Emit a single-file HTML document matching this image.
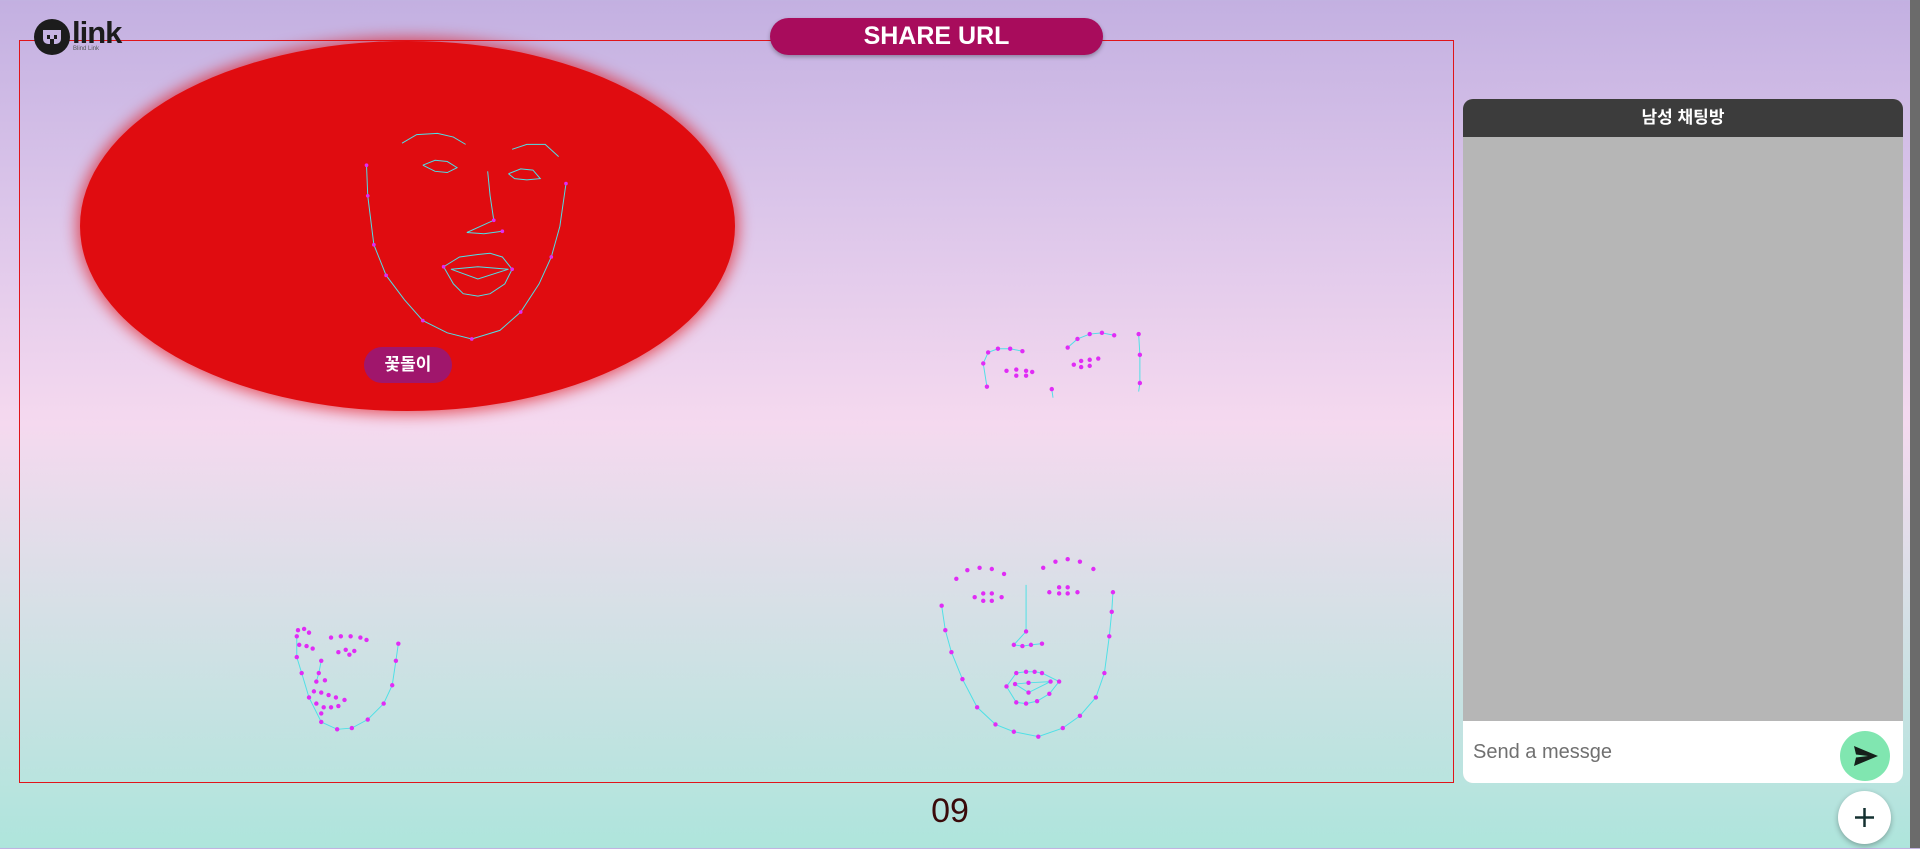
<!DOCTYPE html>
<html><head><meta charset="utf-8"><style>
*{margin:0;padding:0;box-sizing:border-box}
body{width:1920px;height:848px;overflow:hidden;position:relative;font-family:"Liberation Sans","Noto Sans CJK KR",sans-serif;
background:linear-gradient(180deg,#c3b0e1 0%,#dcc6ea 25%,#f5d9ef 50%,#d6e0e6 72%,#aee5dc 100%)}
.frame{position:absolute;left:19px;top:40px;width:1435px;height:743px;border:1px solid #e0141a}
.ell{position:absolute;left:80px;top:41px;width:655px;height:370px;border-radius:50%;background:#e00c10;box-shadow:0 0 14px 4px rgba(224,12,16,.6)}
.pill{position:absolute;left:364px;top:347px;width:88px;height:36px;border-radius:18px;background:#a0166c;color:#fff;font-weight:bold;font-size:17px;text-align:center;line-height:36px}
.share{position:absolute;left:770px;top:18px;width:333px;height:37px;border-radius:19px;background:#a80c5c;color:#fff;font-weight:bold;font-size:25px;text-align:center;line-height:37px;box-shadow:0 2px 4px rgba(0,0,0,.3)}
.chat{position:absolute;left:1463px;top:99px;width:440px;height:684px;border-radius:10px;overflow:hidden;background:#b6b6b6}
.chat .h{height:38px;background:#3c3c3c;color:#fff;font-weight:bold;font-size:17px;text-align:center;line-height:38px}
.chat .in{position:absolute;left:0;bottom:0;width:100%;height:62px;background:#fff;color:#707070;font-size:20px;line-height:62px;padding-left:10px}
.send{position:absolute;left:1840px;top:731px;width:50px;height:50px;border-radius:50%;background:#80e6b0}
.plus{position:absolute;left:1838px;top:791px;width:53px;height:53px;border-radius:50%;background:#fff;box-shadow:0 2px 6px rgba(0,0,0,.3)}
.num{position:absolute;left:920px;top:792px;width:60px;text-align:center;font-size:34px;color:#3a0a0a}
.sb{position:absolute;left:1910px;top:0;width:10px;height:848px;background:#6b6b6b}
svg.f{position:absolute;left:0;top:0}
</style></head><body>
<div class="frame"></div>
<div class="ell"></div>
<div class="pill">꽃돌이</div>
<div class="share">SHARE URL</div>
<svg style="position:absolute;left:34px;top:19px" width="36" height="36" viewBox="0 0 36 36"><circle cx="18" cy="18" r="18" fill="#1c1c1c"/><path d="M9 11h18v9a5 5 0 0 1-5 5h-8a5 5 0 0 1-5-5z" fill="#c5b3e2"/><rect x="13" y="16" width="3" height="4" fill="#1c1c1c"/><rect x="20" y="16" width="3" height="4" fill="#1c1c1c"/><rect x="16" y="20" width="4" height="5" fill="#1c1c1c"/></svg>
<div style="position:absolute;left:72px;top:15px;font-size:31px;font-weight:bold;color:#1c1c1c;letter-spacing:-1px">link</div>
<div style="position:absolute;left:73px;top:46px;font-size:6px;color:#555">Blind Link</div>
<div class="chat"><div class="h">남성 채팅방</div><div class="in">Send a messge</div></div>
<div class="send"><svg width="50" height="50" viewBox="0 0 50 50"><path d="M14 15 L38 25 L14 35 L16 26.5 L28 25 L16 23.5 Z" fill="#151f1a"/></svg></div>
<div class="plus"><svg width="53" height="53"><path d="M26.5 17v19M17 26.5h19" stroke="#143030" stroke-width="2.5"/></svg></div>
<div class="num">09</div>
<div class="sb"></div>
<svg class="f" width="1920" height="848" viewBox="0 0 1568 693" fill="none" stroke="#4fe0e6" stroke-width="0.8">
<g id="f1">
<polyline points="299,135 300,160 305,200 315,225 330,245 345,262 365,272 385,277 408,270 425,255 440,232 450,210 457,185 462,150"/>
<polyline points="328,117 340,110 357,109 370,112 380,118"/>
<polyline points="418,122 430,118 445,118 456,128"/>
<polyline points="345,135 355,131 365,132 373,137 365,141 355,140 345,135"/>
<polyline points="415,142 425,138 435,139 441,146 430,147 420,146 415,142"/>
<polyline points="398,140 400,160 403,180 381,190 395,191 410,189"/>
<polyline points="362,218 375,210 390,208 400,207 410,210 418,220 412,232 400,240 390,242 378,240 370,232 362,218"/>
<polyline points="368,220 390,218 415,220 390,228 368,220"/>
</g>
<polyline points="806,316 803,297 807,288 815,285 825,285 835,287"/>
<polyline points="872,284 880,277 890,273 900,272 910,274"/>
<polyline points="859,318 860,325"/><polyline points="930,273 931,290 931,313 930,320"/>
<polyline points="242,520 242,537 246,550 252,570 262,590 275,596 287,595 300,588 313,575 320,560 323,540 325,526"/>
<polyline points="262,540 260,550 258,557"/>
<polyline points="769,495 772,515 777,533 786,555 798,578 813,592 828,598 848,602 868,595 882,585 895,570 902,550 906,520 908,500 909,484"/>
<polyline points="838,478 838,490 838,503 838,516 828,527 835,528 842,527 851,526"/>
<polyline points="822,561 830,550 838,549 845,549 851,550 865,557 857,567 847,573 838,575 830,574 822,561"/>
<polyline points="829,559 840,558 858,557 840,566 829,559"/>
<g fill="#e02cf5" stroke="none">
<circle cx="299" cy="135" r="1.5"/><circle cx="300" cy="160" r="1.5"/><circle cx="305" cy="200" r="1.5"/><circle cx="315" cy="225" r="1.5"/><circle cx="345" cy="262" r="1.5"/><circle cx="385" cy="277" r="1.5"/><circle cx="425" cy="255" r="1.5"/><circle cx="450" cy="210" r="1.5"/><circle cx="462" cy="150" r="1.5"/><circle cx="362" cy="218" r="1.5"/><circle cx="418" cy="220" r="1.5"/><circle cx="403" cy="180" r="1.5"/><circle cx="410" cy="189" r="1.5"/>
<circle cx="806" cy="316" r="1.8"/><circle cx="803" cy="297" r="1.8"/><circle cx="807" cy="288" r="1.8"/><circle cx="815" cy="285" r="1.8"/><circle cx="825" cy="285" r="1.8"/><circle cx="835" cy="287" r="1.8"/>
<circle cx="872" cy="284" r="1.8"/><circle cx="880" cy="277" r="1.8"/><circle cx="890" cy="273" r="1.8"/><circle cx="900" cy="272" r="1.8"/><circle cx="910" cy="274" r="1.8"/>
<circle cx="822" cy="303" r="1.8"/><circle cx="830" cy="302" r="1.8"/><circle cx="838" cy="303" r="1.8"/><circle cx="843" cy="304" r="1.8"/><circle cx="830" cy="307" r="1.8"/><circle cx="838" cy="307" r="1.8"/>
<circle cx="877" cy="298" r="1.8"/><circle cx="883" cy="295" r="1.8"/><circle cx="890" cy="294" r="1.8"/><circle cx="897" cy="293" r="1.8"/><circle cx="883" cy="300" r="1.8"/><circle cx="890" cy="299" r="1.8"/>
<circle cx="859" cy="318" r="1.8"/><circle cx="930" cy="273" r="1.8"/><circle cx="931" cy="290" r="1.8"/><circle cx="931" cy="313" r="1.8"/>
<circle cx="242" cy="520" r="1.8"/><circle cx="242" cy="537" r="1.8"/><circle cx="246" cy="550" r="1.8"/><circle cx="252" cy="570" r="1.8"/><circle cx="262" cy="590" r="1.8"/><circle cx="275" cy="596" r="1.8"/><circle cx="287" cy="595" r="1.8"/><circle cx="300" cy="588" r="1.8"/><circle cx="313" cy="575" r="1.8"/><circle cx="320" cy="560" r="1.8"/><circle cx="323" cy="540" r="1.8"/><circle cx="325" cy="526" r="1.8"/>
<circle cx="243" cy="515" r="1.8"/><circle cx="248" cy="514" r="1.8"/><circle cx="252" cy="517" r="1.8"/><circle cx="270" cy="521" r="1.8"/><circle cx="278" cy="520" r="1.8"/><circle cx="286" cy="520" r="1.8"/><circle cx="294" cy="521" r="1.8"/><circle cx="299" cy="523" r="1.8"/>
<circle cx="276" cy="533" r="1.8"/><circle cx="282" cy="531" r="1.8"/><circle cx="289" cy="532" r="1.8"/><circle cx="285" cy="535" r="1.8"/><circle cx="244" cy="527" r="1.8"/><circle cx="250" cy="528" r="1.8"/><circle cx="255" cy="530" r="1.8"/>
<circle cx="262" cy="540" r="1.8"/><circle cx="260" cy="550" r="1.8"/><circle cx="258" cy="557" r="1.8"/><circle cx="265" cy="556" r="1.8"/>
<circle cx="256" cy="565" r="1.8"/><circle cx="262" cy="566" r="1.8"/><circle cx="268" cy="568" r="1.8"/><circle cx="274" cy="570" r="1.8"/><circle cx="281" cy="572" r="1.8"/><circle cx="258" cy="575" r="1.8"/><circle cx="264" cy="578" r="1.8"/><circle cx="270" cy="578" r="1.8"/><circle cx="276" cy="577" r="1.8"/><circle cx="262" cy="583" r="1.8"/>
<circle cx="769" cy="495" r="1.8"/><circle cx="772" cy="515" r="1.8"/><circle cx="777" cy="533" r="1.8"/><circle cx="786" cy="555" r="1.8"/><circle cx="798" cy="578" r="1.8"/><circle cx="813" cy="592" r="1.8"/><circle cx="828" cy="598" r="1.8"/><circle cx="848" cy="602" r="1.8"/><circle cx="868" cy="595" r="1.8"/><circle cx="882" cy="585" r="1.8"/><circle cx="895" cy="570" r="1.8"/><circle cx="902" cy="550" r="1.8"/><circle cx="906" cy="520" r="1.8"/><circle cx="908" cy="500" r="1.8"/><circle cx="909" cy="484" r="1.8"/>
<circle cx="781" cy="473" r="1.8"/><circle cx="790" cy="466" r="1.8"/><circle cx="800" cy="464" r="1.8"/><circle cx="810" cy="465" r="1.8"/><circle cx="820" cy="469" r="1.8"/>
<circle cx="852" cy="464" r="1.8"/><circle cx="862" cy="459" r="1.8"/><circle cx="872" cy="457" r="1.8"/><circle cx="882" cy="459" r="1.8"/><circle cx="893" cy="465" r="1.8"/>
<circle cx="796" cy="488" r="1.8"/><circle cx="803" cy="485" r="1.8"/><circle cx="810" cy="485" r="1.8"/><circle cx="818" cy="488" r="1.8"/><circle cx="810" cy="491" r="1.8"/><circle cx="803" cy="491" r="1.8"/>
<circle cx="857" cy="484" r="1.8"/><circle cx="865" cy="480" r="1.8"/><circle cx="872" cy="480" r="1.8"/><circle cx="880" cy="484" r="1.8"/><circle cx="872" cy="485" r="1.8"/><circle cx="865" cy="485" r="1.8"/>
<circle cx="838" cy="516" r="1.8"/><circle cx="828" cy="527" r="1.8"/><circle cx="835" cy="528" r="1.8"/><circle cx="842" cy="527" r="1.8"/><circle cx="851" cy="526" r="1.8"/>
<circle cx="822" cy="561" r="1.8"/><circle cx="830" cy="550" r="1.8"/><circle cx="838" cy="549" r="1.8"/><circle cx="845" cy="549" r="1.8"/><circle cx="851" cy="550" r="1.8"/><circle cx="865" cy="557" r="1.8"/><circle cx="857" cy="567" r="1.8"/><circle cx="847" cy="573" r="1.8"/><circle cx="838" cy="575" r="1.8"/><circle cx="830" cy="574" r="1.8"/><circle cx="840" cy="558" r="1.8"/><circle cx="840" cy="566" r="1.8"/><circle cx="829" cy="559" r="1.8"/><circle cx="858" cy="557" r="1.8"/>
</g>
</svg>
</body></html>
